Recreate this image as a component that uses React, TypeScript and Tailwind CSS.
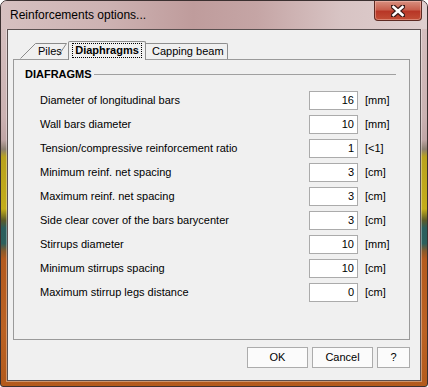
import React from "react";

const rows: { label: string; value: string; unit: string }[] = [
  { label: "Diameter of longitudinal bars", value: "16", unit: "[mm]" },
  { label: "Wall bars diameter", value: "10", unit: "[mm]" },
  { label: "Tension/compressive reinforcement ratio", value: "1", unit: "[<1]" },
  { label: "Minimum reinf. net spacing", value: "3", unit: "[cm]" },
  { label: "Maximum reinf. net spacing", value: "3", unit: "[cm]" },
  { label: "Side clear cover of the bars barycenter", value: "3", unit: "[cm]" },
  { label: "Stirrups diameter", value: "10", unit: "[mm]" },
  { label: "Minimum stirrups spacing", value: "10", unit: "[cm]" },
  { label: "Maximum stirrup legs distance", value: "0", unit: "[cm]" },
];

export default function App() {
  return (
    <div
      className="w-[428px] h-[387px] flex flex-col rounded-t-[7px] rounded-b-[3px] border border-[#3b3030] overflow-hidden bg-[linear-gradient(180deg,#d8c2c2_0%,#cbb2b2_30%,#c0a6a6_36%,#8d8070_38.5%,#b9a21e_40.5%,#c4ad1a_54%,#5a5a28_57%,#2b5e5d_59%,#2d5f5c_63%,#8a5a2a_65%,#b45a1e_67%,#bb6224_85%,#b35a1c_100%)]"
      style={{ fontFamily: '"Liberation Sans", Arial, sans-serif' }}
    >
      {/* Title bar */}
      <div className="h-[28px] shrink-0 flex items-start bg-[linear-gradient(90deg,#d6c0c0_0%,#cdb2b2_25%,#bf9c9c_45%,#c5a5a5_60%,#d8c4c4_80%,#dfcfcf_100%)] relative">
        <div className="pl-[9px] pt-[6px] text-[12px] leading-[16px] text-black">
          Reinforcements options...
        </div>
        <div className="absolute left-[373px] top-0 w-[48px] h-[20px] rounded-b-[4px] border border-t-0 border-[#5e2a22] bg-[linear-gradient(180deg,#d89080_0%,#c8604e_45%,#b83626_55%,#c24e36_100%)] flex items-center justify-center shadow-[inset_0_0_0_1px_rgba(255,210,200,0.4)]">
          <svg width="14" height="12" viewBox="0 0 14 12">
            <path
              d="M2 1.5 L12 10.5 M12 1.5 L2 10.5"
              stroke="#3a1a18"
              strokeWidth="5"
              strokeLinecap="square"
            />
            <path
              d="M2.5 2 L11.5 10 M11.5 2 L2.5 10"
              stroke="#ffffff"
              strokeWidth="2.6"
              strokeLinecap="square"
            />
          </svg>
        </div>
      </div>

      {/* Client area */}
      <div className="flex-1 mx-[6px] mb-[5px] border border-[#5a5050] bg-[#f0f0f0] flex flex-col shadow-[0_0_0_1px_rgba(255,255,255,0.35)]">
        {/* Tabs */}
        <div className="mt-[11px] h-[18px] flex items-end ml-[12px] relative z-10 text-[11px] text-black">
          <div className="relative w-[48px] h-[17px]">
            <svg className="absolute left-0 top-0" width="48" height="17" viewBox="0 0 48 17">
              <polyline
                points="0.5,16.5 15.5,1.5 46.5,1.5 38.5,13.5"
                fill="none"
                stroke="#8a8a8a"
                strokeWidth="1"
              />
            </svg>
            <span className="absolute left-[18px] top-[1px] leading-[16px]">Piles</span>
          </div>
          <div className="relative h-[19px] w-[78px] -mb-[1px] border border-b-0 border-[#8e8e8e] rounded-t-[2px] bg-[#f0f0f0] flex items-start justify-center pt-[2px]">
            <span className="font-bold leading-[13px] px-[2px] outline outline-1 outline-dotted outline-[#000]">
              Diaphragms
            </span>
          </div>
          <div className="h-[16px] w-[82px] border border-b-0 border-l-0 border-[#8e8e8e] rounded-tr-[2px] bg-[#f0f0f0] flex items-center pl-[6px] leading-[15px]">
            Capping beam
          </div>
        </div>

        {/* Panel */}
        <div className="ml-[5px] w-[397px] h-[281px] border border-[#9a9a9a] bg-[#f0f0f0] text-[11px] text-black">
          <div className="mt-[6px] mb-[6px] pl-[11px] pr-[13px] h-[16px] flex items-center">
            <span className="font-bold text-[11px]">DIAFRAGMS</span>
            <div className="flex-1 ml-[2px] h-px bg-[#a0a0a0]" />
          </div>
          <div className="flex flex-col">
            {rows.map((r) => (
              <div key={r.label} className="h-[24px] flex items-center">
                <div className="w-[295px] pl-[26px] leading-[14px]">{r.label}</div>
                <div className="w-[49px] h-[19px] border border-[#ababab] bg-white text-right pr-[3px] leading-[17px]">
                  {r.value}
                </div>
                <div className="ml-[7px] leading-[14px]">{r.unit}</div>
              </div>
            ))}
          </div>
        </div>

        {/* Buttons */}
        <div className="mt-[7px] flex justify-end gap-[4px] mr-[10px] text-[11px] text-black">
          <div className="w-[61px] h-[21px] border border-[#acacac] bg-[#fbfbfb] flex items-center justify-center">
            OK
          </div>
          <div className="w-[61px] h-[21px] border border-[#acacac] bg-[#fbfbfb] flex items-center justify-center">
            Cancel
          </div>
          <div className="w-[33px] h-[21px] border border-[#acacac] bg-[#fbfbfb] flex items-center justify-center">
            ?
          </div>
        </div>
      </div>
    </div>
  );
}
